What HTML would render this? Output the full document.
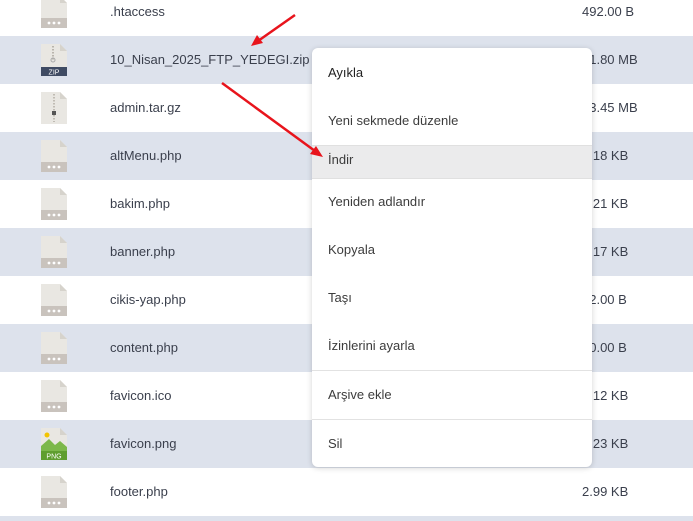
<!DOCTYPE html><html style="height:521px;overflow:hidden"><head><meta charset="utf-8"><style>
body{margin:0;width:693px;height:521px;overflow:hidden;background:#fff;font-family:"Liberation Sans","DejaVu Sans",sans-serif;position:relative}
.r{position:absolute;left:0;width:693px;height:48px}
.b{background:#dde2ec}
.n{position:absolute;left:110px;font-size:13px;color:#3a3f4c;line-height:16px}
.s{position:absolute;left:582px;font-size:13px;color:#3a3f4c;line-height:16px}
.ic{position:absolute;left:41px;width:26px;height:32px}
.m{position:absolute;left:312px;top:48px;width:280px;height:419px;background:#fff;border-radius:6px;box-shadow:0 1px 6px rgba(0,0,0,.18)}
.mi{position:absolute;left:16px;font-size:13px;color:#3c3c3c;line-height:16px}
.sep{position:absolute;left:0;width:280px;height:1px;background:#e2e2e2}
</style></head><body>
<div class="r b" style="top:36px"></div>
<div class="r b" style="top:132px"></div>
<div class="r b" style="top:228px"></div>
<div class="r b" style="top:324px"></div>
<div class="r b" style="top:420px"></div>
<div class="r b" style="top:516px;height:5px"></div>

<svg width="0" height="0" style="position:absolute"><defs>
<symbol id="f" viewBox="0 0 26 32"><path d="M0 0H19L26 7V32H0Z" fill="#e9e7e2"/><path d="M19 0V7H26" fill="#d6d3cc"/><rect x="0" y="22" width="26" height="10" fill="#c9c3bd"/><circle cx="8" cy="27" r="1.4" fill="#fff"/><circle cx="13" cy="27" r="1.4" fill="#fff"/><circle cx="18" cy="27" r="1.4" fill="#fff"/></symbol>
</defs></svg>

<svg class="ic" style="top:-4px"><use href="#f"/></svg>
<svg class="ic" style="top:44px" viewBox="0 0 26 32"><path d="M0 0H19L26 7V32H0Z" fill="#e9e7e2"/><path d="M19 0V7H26" fill="#d6d3cc"/><path d="M12 2V16" stroke="#b9b4ac" stroke-width="2" stroke-dasharray="1.5 1.5"/><circle cx="12" cy="16" r="2" fill="none" stroke="#aaa"/><rect x="0" y="23" width="26" height="9" fill="#3f4b63"/><text x="13" y="30.5" font-size="7" fill="#fff" text-anchor="middle" font-family="Liberation Sans">ZIP</text></svg>
<svg class="ic" style="top:92px" viewBox="0 0 26 32"><path d="M0 0H19L26 7V32H0Z" fill="#e9e7e2"/><path d="M19 0V7H26" fill="#d6d3cc"/><path d="M13 2V30" stroke="#c0bbb3" stroke-width="2" stroke-dasharray="1.5 1.5"/><rect x="11" y="19" width="4" height="4" fill="#555"/></svg>
<svg class="ic" style="top:140px"><use href="#f"/></svg>
<svg class="ic" style="top:188px"><use href="#f"/></svg>
<svg class="ic" style="top:236px"><use href="#f"/></svg>
<svg class="ic" style="top:284px"><use href="#f"/></svg>
<svg class="ic" style="top:332px"><use href="#f"/></svg>
<svg class="ic" style="top:380px"><use href="#f"/></svg>
<svg class="ic" style="top:428px" viewBox="0 0 26 32"><path d="M0 0H19L26 7V32H0Z" fill="#e9e7e2"/><path d="M19 0V7H26" fill="#d6d3cc"/><circle cx="6" cy="7" r="2.5" fill="#f2c400"/><path d="M0 18L8 11L14 17L19 13L26 19V32H0Z" fill="#7cb84a"/><rect x="0" y="23" width="26" height="9" fill="#5f9e2f"/><text x="13" y="30.5" font-size="7" fill="#fff" text-anchor="middle" font-family="Liberation Sans">PNG</text></svg>
<svg class="ic" style="top:476px"><use href="#f"/></svg>

<div class="n" style="top:4px">.htaccess</div>
<div class="n" style="top:52px">10_Nisan_2025_FTP_YEDEGI.zip</div>
<div class="n" style="top:100px">admin.tar.gz</div>
<div class="n" style="top:148px">altMenu.php</div>
<div class="n" style="top:196px">bakim.php</div>
<div class="n" style="top:244px">banner.php</div>
<div class="n" style="top:292px">cikis-yap.php</div>
<div class="n" style="top:340px">content.php</div>
<div class="n" style="top:388px">favicon.ico</div>
<div class="n" style="top:436px">favicon.png</div>
<div class="n" style="top:484px">footer.php</div>

<div class="s" style="top:4px">492.00 B</div>
<div class="s" style="top:52px">51.80 MB</div>
<div class="s" style="top:100px">13.45 MB</div>
<div class="s" style="top:148px">1.18 KB</div>
<div class="s" style="top:196px">1.21 KB</div>
<div class="s" style="top:244px">1.17 KB</div>
<div class="s" style="top:292px">92.00 B</div>
<div class="s" style="top:340px">80.00 B</div>
<div class="s" style="top:388px">1.12 KB</div>
<div class="s" style="top:436px">2.23 KB</div>
<div class="s" style="top:484px">2.99 KB</div>

<div class="m">
<div class="mi" style="top:17px;color:#222">Ayıkla</div>
<div class="mi" style="top:65px">Yeni sekmede düzenle</div>
<div style="position:absolute;left:0;top:97px;width:280px;height:32px;background:#ebebec;border-top:1px solid #e0e0e0;border-bottom:1px solid #e0e0e0"></div>
<div class="mi" style="top:104px">İndir</div>
<div class="mi" style="top:146px">Yeniden adlandır</div>
<div class="mi" style="top:194px">Kopyala</div>
<div class="mi" style="top:242px">Taşı</div>
<div class="mi" style="top:290px">İzinlerini ayarla</div>
<div class="sep" style="top:322px"></div>
<div class="mi" style="top:339px">Arşive ekle</div>
<div class="sep" style="top:371px"></div>
<div class="mi" style="top:388px">Sil</div>
</div>

<svg style="position:absolute;left:0;top:0" width="693" height="521">
<line x1="295" y1="15" x2="258" y2="41" stroke="#e8141c" stroke-width="2.5"/>
<path d="M251 46L257 35L263 43Z" fill="#e8141c"/>
<line x1="222" y1="83" x2="315" y2="151" stroke="#e8141c" stroke-width="2.5"/>
<path d="M323 157L310 154L316 146Z" fill="#e8141c"/>
</svg>
</body></html>
